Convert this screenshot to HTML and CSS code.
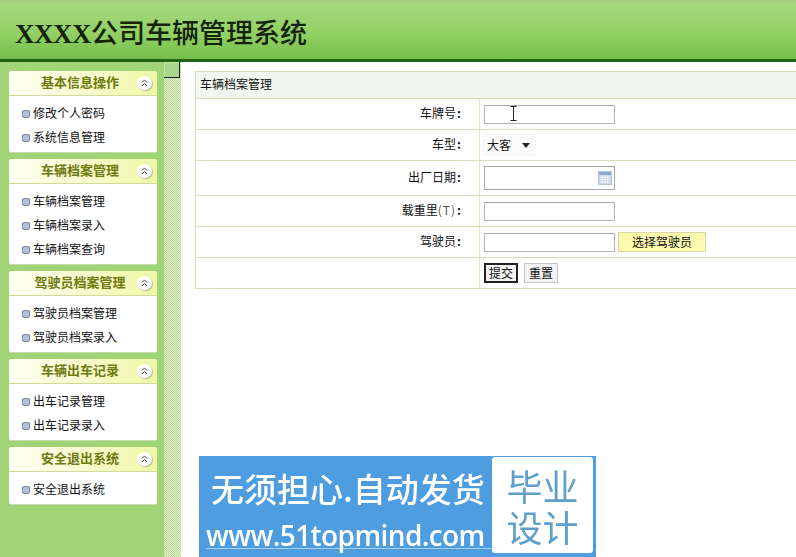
FILE: index.html
```html
<!DOCTYPE html>
<html lang="zh">
<head>
<meta charset="utf-8">
<title>XXXX公司车辆管理系统</title>
<link rel="stylesheet" href="styles.css">
</head>
<body>
<header class="top"><h1 class="title"><span class="xxxx">XXXX</span>公司车辆管理系统</h1></header>
<div class="layout">
  <aside class="side">
    <section class="panel"><div class="phead"><h2>基本信息操作</h2><span class="chev"><svg width="15" height="14" viewBox="0 0 15 14"><path class="cp" d="M5 6.500l2.500-2.500 2.500 2.500M5 10l2.500-2.500 2.500 2.500"/></svg></span></div>
      <ul class="pbody"><li>修改个人密码</li><li>系统信息管理</li></ul></section>
    <section class="panel"><div class="phead"><h2>车辆档案管理</h2><span class="chev"><svg width="15" height="14" viewBox="0 0 15 14"><path class="cp" d="M5 6.500l2.500-2.500 2.500 2.500M5 10l2.500-2.500 2.500 2.500"/></svg></span></div>
      <ul class="pbody"><li>车辆档案管理</li><li>车辆档案录入</li><li>车辆档案查询</li></ul></section>
    <section class="panel"><div class="phead"><h2>驾驶员档案管理</h2><span class="chev"><svg width="15" height="14" viewBox="0 0 15 14"><path class="cp" d="M5 6.500l2.500-2.500 2.500 2.500M5 10l2.500-2.500 2.500 2.500"/></svg></span></div>
      <ul class="pbody"><li>驾驶员档案管理</li><li>驾驶员档案录入</li></ul></section>
    <section class="panel"><div class="phead"><h2>车辆出车记录</h2><span class="chev"><svg width="15" height="14" viewBox="0 0 15 14"><path class="cp" d="M5 6.500l2.500-2.500 2.500 2.500M5 10l2.500-2.500 2.500 2.500"/></svg></span></div>
      <ul class="pbody"><li>出车记录管理</li><li>出车记录录入</li></ul></section>
    <section class="panel"><div class="phead"><h2>安全退出系统</h2><span class="chev"><svg width="15" height="14" viewBox="0 0 15 14"><path class="cp" d="M5 6.500l2.500-2.500 2.500 2.500M5 10l2.500-2.500 2.500 2.500"/></svg></span></div>
      <ul class="pbody"><li>安全退出系统</li></ul></section>
  </aside>
  <div class="split"><span class="toggle"></span></div>
  <main class="main">
    <div class="grid">
      <div class="ghead">车辆档案管理</div>
      <div class="row r1"><div class="lab">车牌号<span class="c">:</span></div><div class="val"><span class="inp"></span><svg class="cursor" width="7" height="15" viewBox="0 0 7 15"><path d="M0.5 0.5h6M3.500 0.500v14M0.500 14.500h6" fill="none" stroke="#222" stroke-width="1"/></svg></div></div>
      <div class="row r2"><div class="lab">车型<span class="c">:</span></div><div class="val"><span class="sel">大客<i class="arrow"></i></span></div></div>
      <div class="row r3"><div class="lab">出厂日期<span class="c">:</span></div><div class="val"><span class="inp tall"><svg class="cal" width="14" height="14" viewBox="0 0 14 14"><rect x="0.500" y="0.500" width="13" height="13" fill="#c9d6e6" stroke="#b4c4d8"/><rect x="1" y="1" width="12" height="3" fill="#8fabcc"/><path d="M2 6h10M2 8.500h10M2 11h10M4.500 5v7M7 5v7M9.500 5v7" stroke="#eef2f8" stroke-width="1"/></svg></span></div></div>
      <div class="row r4"><div class="lab">载重里<span class="t">(T)</span><span class="c">:</span></div><div class="val"><span class="inp"></span></div></div>
      <div class="row r5"><div class="lab">驾驶员<span class="c">:</span></div><div class="val"><span class="inp"></span><span class="pick">选择驾驶员</span></div></div>
      <div class="row r6"><div class="lab"></div><div class="val btns"><span class="btn on">提交</span><span class="btn">重置</span></div></div>
    </div>
    <div class="banner">
      <div class="bleft"><div class="bl1">无须担心.自动发货</div><div class="bl2">www.51topmind.com</div></div>
      <div class="bright">毕业<br>设计</div>
    </div>
  </main>
</div>
</body>
</html>
```
FILE: styles.css
```css
* { box-sizing: border-box; }
html, body { margin: 0; padding: 0; }
body { width: 796px; height: 557px; overflow: hidden; background: #fff; font: 12px/16px "Noto Sans CJK SC", "Liberation Sans", sans-serif; color: #111; }
.top { height: 62px; padding: 15px 0 0 15px; border-top: 2px solid #a9cf85; border-bottom: 3px solid #1f6412; background: linear-gradient(#a6d882, #93d064 55%, #76bf4c); }
.title { margin: 0; font: 500 27px/30px "Noto Sans CJK SC", "Liberation Serif", serif; color: #14240c; white-space: nowrap; }
.xxxx { font: bold 27px/30px "Liberation Serif", serif; letter-spacing: -0.5px; }
.layout { display: flex; height: 495px; }
.side { width: 164px; flex: none; background: #a1d477; padding: 9px 7px 0 9px; display: flex; flex-direction: column; gap: 6px; }
.panel { width: 148px; background: #fff; border-bottom: 1px solid #c9dcb0; border-radius: 3px; }
.phead { height: 25px; padding-bottom: 2px; display: flex; align-items: center; position: relative; border-bottom: 1px solid #cddc9a; border-radius: 3px 3px 0 0; background: linear-gradient(90deg, #fffff4, #f0f7a8); }
.phead h2 { margin: 0; width: 142px; text-align: center; font: bold 13px/16px "Noto Sans CJK SC", sans-serif; color: #6f7a10; }
.chev { position: absolute; left: 128px; top: 5px; width: 15px; height: 14px; border-radius: 50%; background: #fff; box-shadow: 1px 1px 1px #b9b9a0; }
.chev svg { display: block; }
.cp { fill: none; stroke: #444; stroke-width: 1; }
.pbody { list-style: none; margin: 0; padding: 5px 0 3px 0; }
.pbody li { height: 24px; line-height: 23px; padding-left: 24px; position: relative; color: #111; }
.pbody li::before { content: ""; position: absolute; left: 13px; top: 9px; width: 6px; height: 6px; border-radius: 2px; background: #b4c0d8; border: 1px solid #7a88a4; }
.split { width: 17px; flex: none; background-color: #c8e4a4; background-image: repeating-conic-gradient(#e4f1d2 0 25%, #b6da8e 0 50%); background-size: 2px 2px; }
.toggle { display: block; width: 16px; height: 16px; background: #a9d88a; border-right: 1px solid #123; border-bottom: 1px solid #123; box-shadow: inset 1px 1px 0 #c4e6ac; }
.main { flex: 1; min-width: 0; padding: 9px 0 0 14px; background: #fff; }
.grid { width: 640px; height: 218px; border: 1px solid #d8dcb8; }
.ghead { height: 27px; line-height: 24px; padding-left: 4px; background: #f1f7ee; border-bottom: 1px solid #d8dcb8; }
.row { display: flex; border-bottom: 1px solid #d8dcb8; }
.row:last-child { border-bottom: 0; }
.r1 { height: 31px; } .r2 { height: 31px; } .r3 { height: 35px; } .r4 { height: 31px; } .r5 { height: 31px; } .r6 { height: 30px; }
.lab { width: 284px; flex: none; padding-right: 17px; text-align: right; line-height: 28px; border-right: 1px solid #e4e6c8; }
.r3 .lab { line-height: 32px; }
.c { display: inline-block; width: 6px; text-align: center; font-weight: bold; }
.t { color: #555; letter-spacing: 1px; }
.val { flex: 1; padding-left: 4px; display: flex; align-items: center; position: relative; }
.inp { display: block; width: 131px; height: 19px; border: 1px solid #b4b4b4; border-top-color: #a8a8a8; background: #fff; position: relative; }
.inp.tall { height: 24px; border-color: #a8a8b4; }
.cal { position: absolute; right: 2px; top: 4px; }
.cursor { position: absolute; left: 30px; top: 7px; }
.sel { display: flex; align-items: center; width: 51px; height: 20px; padding-left: 3px; background: #fbfbfb; box-shadow: 0 0 0 1px #f6f6f6; }
.arrow { width: 0; height: 0; margin-left: 11px; border: 4.500px solid transparent; border-top: 5px solid #222; border-bottom: 0; }
.pick { width: 88px; height: 20px; margin-left: 3px; text-align: center; line-height: 18px; background: #fbf9ae; border: 1px solid #d8d8a8; }
.btns { gap: 6px; }
.btn { width: 34px; height: 20px; text-align: center; line-height: 17px; background: #f2f2f2; border: 1px solid #c4c4c4; }
.btn.on { border: 2px solid #222; line-height: 15px; }
.banner { width: 397px; height: 101px; margin: 167px 0 0 4px; padding: 1px 3px 4px 0; display: flex; background: #4d9de0; color: #fff; filter: blur(0.6px); }
.bleft { width: 293px; flex: none; padding-left: 12px; }
.bl1 { font: 500 33px/46px "Noto Sans CJK SC", sans-serif; margin-top: 8px; white-space: nowrap; }
.bl2 { font: 600 28px/34px "Open Sans", "Liberation Sans", sans-serif; white-space: nowrap; letter-spacing: -0.6px; margin: 7px 0 0 -5px; border-bottom: 1px solid #a8d0f0; height: 31px; }
.bright { flex: 1; background: #fff; border-radius: 3px; text-align: center; font: 36px/41px "Noto Sans CJK SC", sans-serif; color: #5f9fcc; padding-top: 8px; }
```
